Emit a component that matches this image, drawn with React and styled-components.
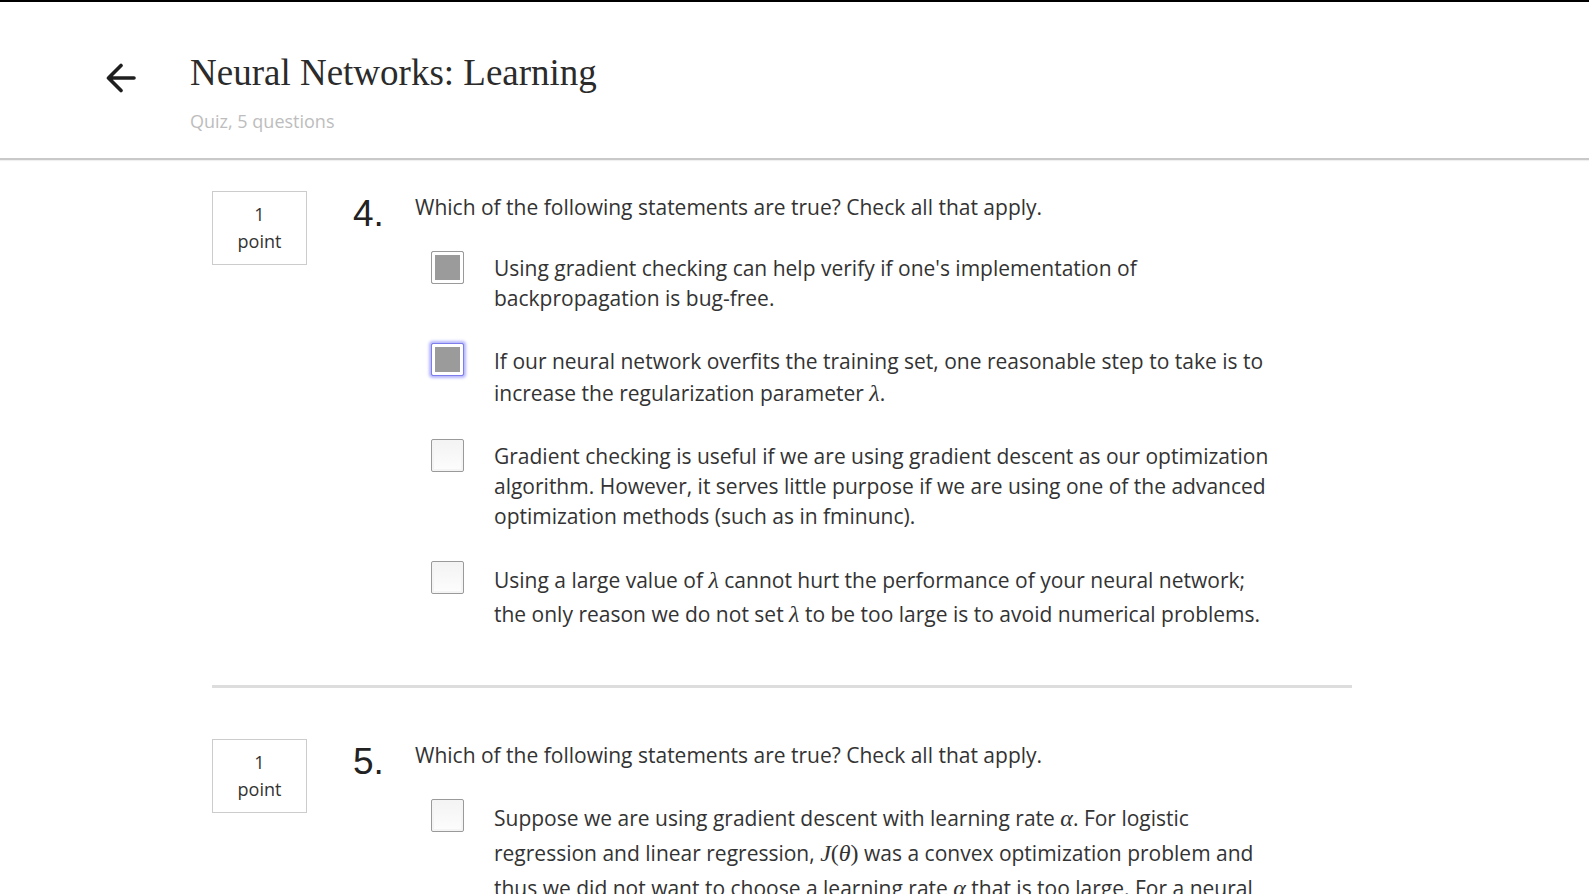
import React from "react";
import styled, { createGlobalStyle } from "styled-components";

const GlobalStyle = createGlobalStyle`
  html, body {
    margin: 0;
    padding: 0;
    background: #ffffff;
  }
  body {
    font-family: "Open Sans", "Noto Sans", sans-serif;
    color: #333333;
    overflow: hidden;
  }
`;

// Header
const Header = styled.header`
  border-top: 2px solid #000;
  border-bottom: 2px solid #c9c9c9;
  box-shadow: 0 1px 1px rgba(0, 0, 0, 0.06);
  display: flex;
  align-items: flex-start;
  padding: 48px 0 25px 106px;
`;

const BackButton = styled.button`
  border: none;
  background: none;
  padding: 0;
  margin-top: 13px;
  width: 30px;
  height: 30px;
  cursor: pointer;
  display: flex;
`;

const HeaderText = styled.div`
  margin-left: 54px;
  display: flex;
  flex-direction: column;
`;

const Title = styled.h1`
  margin: 0;
  font-family: "Liberation Serif", "Times New Roman", serif;
  font-weight: normal;
  font-size: 37px;
  line-height: 45px;
  color: #2b2b2b;
`;

const Subtitle = styled.div`
  margin-top: 14px;
  font-size: 18px;
  line-height: 24px;
  color: #bdbdbd;
`;

// Quiz body
const Main = styled.main`
  padding-left: 212px;
  width: 1140px;
`;

const Question = styled.section`
  display: flex;
  align-items: flex-start;
  padding-top: ${(p) => p.$top}px;
  padding-bottom: 54px;
`;

const PointBox = styled.div`
  box-sizing: border-box;
  width: 95px;
  height: 74px;
  border: 1px solid #cccccc;
  padding: 9px 0 8px;
  text-align: center;
  font-size: 18px;
  line-height: 27px;
  color: #333;
  flex-shrink: 0;
`;

const QNumber = styled.div`
  margin-left: 46px;
  width: 62px;
  margin-top: 4px;
  font-family: "Liberation Sans", Arial, sans-serif;
  font-size: 37px;
  line-height: 37px;
  color: #222;
  flex-shrink: 0;
`;

const QBody = styled.div`
  flex: 1;
  padding-top: 1px;
`;

const QText = styled.div`
  font-size: 21px;
  line-height: 30px;
  color: #333;
`;

const Options = styled.div`
  margin-top: 31px;
  padding-left: 16px;
  display: flex;
  flex-direction: column;
  gap: 32px;
`;

const Option = styled.label`
  display: flex;
  align-items: flex-start;
  cursor: pointer;
`;

const Checkbox = styled.span`
  box-sizing: border-box;
  width: 33px;
  height: 33px;
  margin-top: -2px;
  flex-shrink: 0;
  border: 1px solid ${(p) => (p.$focus ? "#7d7ded" : "#9a9a9a")};
  border-radius: 2px;
  background: ${(p) =>
    p.$checked ? "#9b9b9b" : "linear-gradient(#f3f3f3, #fdfdfd)"};
  box-shadow: ${(p) =>
    p.$checked
      ? `inset 0 0 0 3px #fff${p.$focus ? ", 0 0 3px 2px #b4b4fb" : ""}`
      : "inset 0 0 0 2px #f4f4f4"};
`;

const OptionText = styled.div`
  margin-left: 30px;
  width: 778px;
  font-size: 21px;
  line-height: ${(p) => p.$lh || 30}px;
  color: #333;
`;

const MathExpr = styled.span`
  font-family: "Liberation Serif", "DejaVu Serif", serif;
  font-size: 24px;
  color: #333;
  white-space: nowrap;
`;

const MathVar = styled.i`
  font-style: italic;
`;

const Divider = styled.hr`
  margin: 0;
  border: none;
  height: 3px;
  background: #dddddd;
`;

const BackArrow = () => (
  <svg width="30" height="30" viewBox="0 0 30 30" fill="none">
    <path
      d="M28 15H3M15 2.5L2.5 15L15 27.5"
      stroke="#1f1f1f"
      strokeWidth="3.6"
      strokeLinecap="round"
      strokeLinejoin="round"
    />
  </svg>
);

const M = ({ v }) => (
  <MathExpr>
    <MathVar>{v}</MathVar>
  </MathExpr>
);

const Fn = ({ f, x }) => (
  <MathExpr>
    <MathVar>{f}</MathVar>(<MathVar>{x}</MathVar>)
  </MathExpr>
);

const questions = [
  {
    num: 4,
    top: 31,
    text: "Which of the following statements are true? Check all that apply.",
    options: [
      {
        checked: true,
        content:
          "Using gradient checking can help verify if one's implementation of backpropagation is bug-free.",
      },
      {
        checked: true,
        focus: true,
        lh: 32,
        content: (
          <>
            If our neural network overfits the training set, one reasonable step to
            take is to increase the regularization parameter <M v="λ" />.
          </>
        ),
      },
      {
        content:
          "Gradient checking is useful if we are using gradient descent as our optimization algorithm. However, it serves little purpose if we are using one of the advanced optimization methods (such as in fminunc).",
      },
      {
        lh: 34,
        content: (
          <>
            Using a large value of <M v="λ" /> cannot hurt the performance of your
            neural network; the only reason we do not set <M v="λ" /> to be too
            large is to avoid numerical problems.
          </>
        ),
      },
    ],
  },
  {
    num: 5,
    top: 51,
    text: "Which of the following statements are true? Check all that apply.",
    options: [
      {
        lh: 35,
        content: (
          <>
            Suppose we are using gradient descent with learning rate <M v="α" />.
            For logistic regression and linear regression, <Fn f="J" x="θ" /> was a
            convex optimization problem and thus we did not want to choose a
            learning rate <M v="α" /> that is too large. For a neural network
            however, <Fn f="J" x="Θ" /> may not be convex, and thus choosing a very
            large value of <M v="α" /> can only speed up convergence.
          </>
        ),
      },
      {
        content:
          "Computing the gradient of the cost function in a neural network has the same efficiency when we use backpropagation or when we numerically compute it using the method of gradient checking.",
      },
    ],
  },
];

export default function App() {
  return (
    <>
      <GlobalStyle />
      <Header>
        <BackButton aria-label="Back">
          <BackArrow />
        </BackButton>
        <HeaderText>
          <Title>Neural Networks: Learning</Title>
          <Subtitle>Quiz, 5 questions</Subtitle>
        </HeaderText>
      </Header>

      <Main>
        {questions.map((q, qi) => (
          <React.Fragment key={q.num}>
            {qi > 0 && <Divider />}
            <Question $top={q.top}>
              <PointBox>
                1
                <br />
                point
              </PointBox>
              <QNumber>{q.num}.</QNumber>
              <QBody>
                <QText>{q.text}</QText>
                <Options>
                  {q.options.map((o, i) => (
                    <Option key={i}>
                      <Checkbox $checked={o.checked} $focus={o.focus} />
                      <OptionText $lh={o.lh}>{o.content}</OptionText>
                    </Option>
                  ))}
                </Options>
              </QBody>
            </Question>
          </React.Fragment>
        ))}
      </Main>
    </>
  );
}
